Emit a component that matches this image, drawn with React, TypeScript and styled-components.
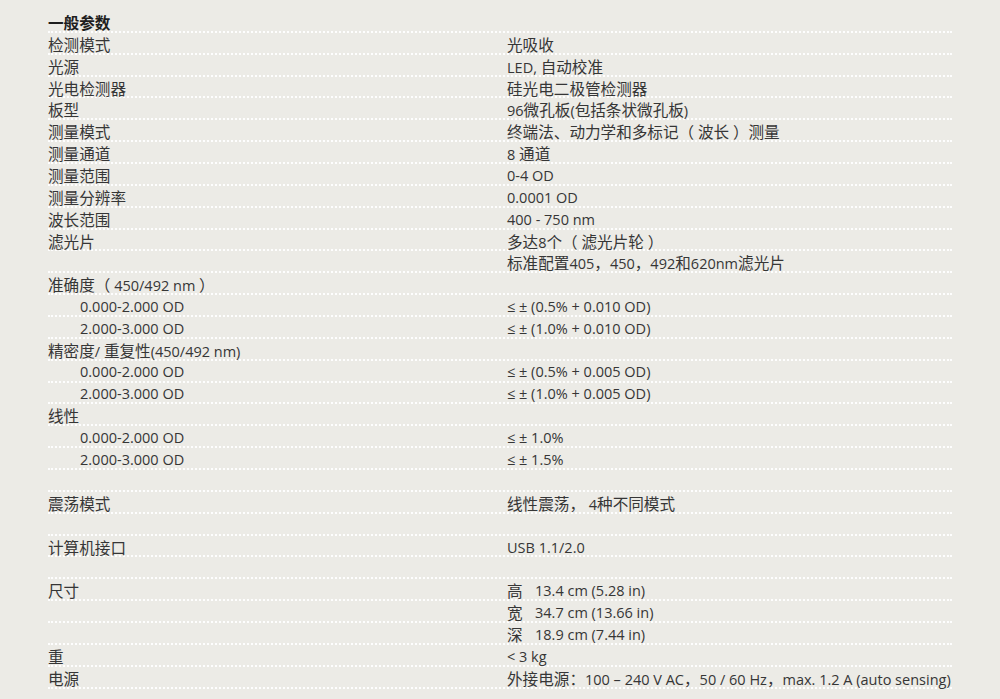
import React from "react";
import styled, { createGlobalStyle } from "styled-components";

const GlobalStyle = createGlobalStyle`
  html, body {
    margin: 0;
    padding: 0;
    background: #ecebe6;
  }
  body {
    font-family: "Open Sans", "Noto Sans CJK SC", sans-serif;
    color: #363636;
  }
`;

const ROW_H = 21.87;

const Sheet = styled.div`
  width: 904px;
  margin-left: 48px;
  padding-top: 11px;
`;

const Row = styled.div<{ $title?: boolean }>`
  box-sizing: border-box;
  height: ${ROW_H}px;
  display: grid;
  grid-template-columns: 459px 1fr;
  align-items: center;
  border-bottom: 2px dotted rgba(255, 255, 255, 0.95);
  font-size: 14.5px;
  line-height: 1;
  padding-top: 4px;
  white-space: nowrap;
  ${(p) =>
    p.$title &&
    `
    font-weight: 700;
    color: #1e1e1e;
  `}
`;

const Label = styled.span<{ $indent?: boolean }>`
  padding-left: ${(p) => (p.$indent ? "32px" : "0")};
`;

const Value = styled.span`
  display: flex;
  align-items: center;
`;

// Chinese glyphs sit a touch larger than the Latin text in the sheet
const Han = styled.span`
  font-family: "Noto Sans CJK SC", sans-serif;
  font-size: 15.6px;
`;

const Axis = styled.span`
  display: inline-block;
  width: 28px;
`;

const cjk = /([\u3000-\u303f\u4e00-\u9fff\uff00-\uffef]+)/;

const txt = (s?: string) =>
  s
    ? s.split(cjk).map((part, i) =>
        cjk.test(part) ? <Han key={i}>{part}</Han> : part
      )
    : null;

type Item = { label?: string; value?: string; axis?: string; indent?: boolean };

const rows: Item[] = [
  { label: "检测模式", value: "光吸收" },
  { label: "光源", value: "LED, 自动校准" },
  { label: "光电检测器", value: "硅光电二极管检测器" },
  { label: "板型", value: "96微孔板(包括条状微孔板)" },
  { label: "测量模式", value: "终端法、动力学和多标记（ 波长 ）测量" },
  { label: "测量通道", value: "8 通道" },
  { label: "测量范围", value: "0-4 OD" },
  { label: "测量分辨率", value: "0.0001 OD" },
  { label: "波长范围", value: "400 - 750 nm" },
  { label: "滤光片", value: "多达8个（ 滤光片轮 ）" },
  { value: "标准配置405，450，492和620nm滤光片" },
  { label: "准确度（ 450/492 nm ）" },
  { label: "0.000-2.000 OD", value: "≤ ± (0.5% + 0.010 OD)", indent: true },
  { label: "2.000-3.000 OD", value: "≤ ± (1.0% + 0.010 OD)", indent: true },
  { label: "精密度/ 重复性(450/492 nm)" },
  { label: "0.000-2.000 OD", value: "≤ ± (0.5% + 0.005 OD)", indent: true },
  { label: "2.000-3.000 OD", value: "≤ ± (1.0% + 0.005 OD)", indent: true },
  { label: "线性" },
  { label: "0.000-2.000 OD", value: "≤ ± 1.0%", indent: true },
  { label: "2.000-3.000 OD", value: "≤ ± 1.5%", indent: true },
  {},
  { label: "震荡模式", value: "线性震荡， 4种不同模式" },
  {},
  { label: "计算机接口", value: "USB 1.1/2.0" },
  {},
  { label: "尺寸", axis: "高", value: "13.4 cm (5.28 in)" },
  { axis: "宽", value: "34.7 cm (13.66 in)" },
  { axis: "深", value: "18.9 cm (7.44 in)" },
  { label: "重", value: "< 3 kg" },
  {
    label: "电源",
    value: "外接电源：100 – 240 V AC，50 / 60 Hz，max. 1.2 A (auto sensing)",
  },
];

export default function App() {
  return (
    <>
      <GlobalStyle />
      <Sheet>
        <Row $title>
          <Label>{txt("一般参数")}</Label>
        </Row>
        {rows.map((r, i) => (
          <Row key={i}>
            <Label $indent={r.indent}>{txt(r.label)}</Label>
            <Value>
              {r.axis && <Axis>{txt(r.axis)}</Axis>}
              <span>{txt(r.value)}</span>
            </Value>
          </Row>
        ))}
      </Sheet>
    </>
  );
}
